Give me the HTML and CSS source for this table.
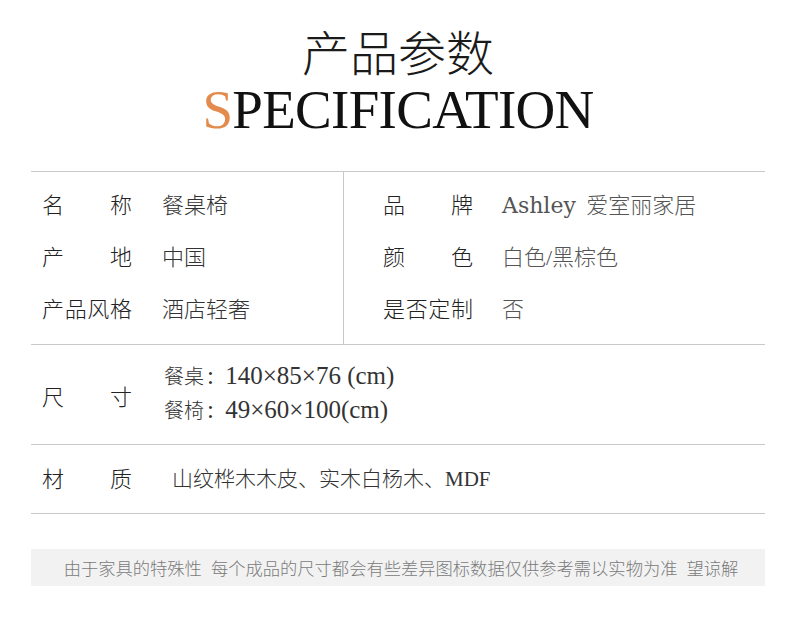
FILE: index.html
```html
<!DOCTYPE html>
<html lang="zh-CN">
<head>
<meta charset="utf-8">
<title>产品参数</title>
<link rel="stylesheet" href="styles.css">
</head>
<body>
<div class="page">
  <header class="head">
    <h1 class="title-cn">产品参数</h1>
    <div class="title-en"><span class="accent">S</span>PECIFICATION</div>
  </header>

  <section class="specs">
    <div class="top">
      <div class="col col-left">
        <div class="row"><span class="label">名称</span><span class="value">餐桌椅</span></div>
        <div class="row"><span class="label">产地</span><span class="value">中国</span></div>
        <div class="row"><span class="label">产品风格</span><span class="value">酒店轻奢</span></div>
      </div>
      <div class="col col-right">
        <div class="row"><span class="label">品牌</span><span class="value value-light"><span class="brand">Ashley</span> 爱室丽家居</span></div>
        <div class="row"><span class="label">颜色</span><span class="value value-light">白色/黑棕色</span></div>
        <div class="row"><span class="label">是否定制</span><span class="value value-light">否</span></div>
      </div>
    </div>

    <div class="wide size">
      <span class="label label-wide">尺寸</span>
      <div class="lines">
        <div><span class="cjk">餐桌</span><span class="colon">:</span> 140×85×76 (cm)</div>
        <div><span class="cjk">餐椅</span><span class="colon">:</span> 49×60×100(cm)</div>
      </div>
    </div>

    <div class="wide material">
      <span class="label label-wide">材质</span>
      <span class="value value-material">山纹桦木木皮、实木白杨木、MDF</span>
    </div>
  </section>

  <p class="note">由于家具的特殊性<span class="gap"></span>每个成品的尺寸都会有些差异图标数据仅供参考需以实物为准<span class="gap"></span>望谅解</p>
</div>
</body>
</html>
```

FILE: styles.css
```css
html, body {
  margin: 0;
  padding: 0;
  background: #ffffff;
}

.page {
  width: 734px;
  margin-left: 31px;
  padding-top: 26px;
  font-family: "Liberation Serif", "Noto Sans CJK SC", serif;
  color: #222;
}

.head {
  display: flex;
  flex-direction: column;
  align-items: center;
  padding-left: 0;
}

.title-cn {
  margin: 0;
  font-family: "Noto Sans CJK SC", sans-serif;
  font-weight: 300;
  font-size: 48px;
  line-height: 48px;
  color: #1a1a1a;
}

.title-en {
  font-family: "Liberation Serif", serif;
  font-size: 55px;
  line-height: 60px;
  letter-spacing: -0.7px;
  color: #111;
  margin-top: 6px;
}

.accent {
  color: #e38a4c;
}

.specs {
  margin-top: 31px;
  border-top: 1px solid #c9c9c9;
}

.top {
  display: grid;
  grid-template-columns: 312px 1fr;
  border-bottom: 1px solid #c9c9c9;
}

.col {
  padding: 5px 0 11px;
}

.col-left {
  padding-left: 11px;
}

.col-right {
  border-left: 1px solid #c9c9c9;
  padding-left: 39px;
}

.row {
  display: flex;
  align-items: center;
  height: 52px;
}

.label {
  width: 90px;
  flex: none;
  font-family: "Noto Sans CJK SC", sans-serif;
  font-weight: 300;
  font-size: 22px;
  color: #222;
  text-align: justify;
  text-align-last: justify;
}

.col-left .label {
  margin-right: 30px;
}

.col-right .label {
  margin-right: 29px;
}

.value {
  font-family: "Liberation Serif", "Noto Sans CJK SC", serif;
  font-weight: 300;
  font-size: 22px;
  color: #333;
}

.value-light {
  color: #555;
}

.brand {
  font-family: "DejaVu Serif", serif;
  font-size: 22px;
  font-weight: 300;
  margin-right: 5px;
}

.wide {
  box-sizing: border-box;
  display: flex;
  align-items: center;
  padding-left: 11px;
  border-bottom: 1px solid #c9c9c9;
}

.label-wide {
  width: 90px;
}

.size {
  height: 100px;
  padding-bottom: 3px;
}

.size .label {
  margin-right: 32px;
  padding-top: 4px;
}

.lines {
  font-family: "Liberation Serif", serif;
  font-size: 25px;
  line-height: 34px;
  color: #333;
}

.cjk {
  font-family: "Noto Sans CJK SC", sans-serif;
  font-weight: 300;
  font-size: 20px;
}

.colon {
  margin-left: 3px;
  margin-right: 5px;
}

.material {
  height: 69px;
  padding-bottom: 5px;
}

.material .label {
  margin-right: 40px;
}

.value-material {
  font-size: 21px;
}

.note {
  margin: 35px 0 0;
  height: 37px;
  padding-left: 6px;
  background: #f2f2f2;
  display: flex;
  align-items: center;
  justify-content: center;
  font-family: "Noto Sans CJK SC", sans-serif;
  font-weight: 300;
  font-size: 17.3px;
  color: #7a7a7a;
  white-space: nowrap;
}

.gap {
  display: inline-block;
  width: 9px;
}
```
